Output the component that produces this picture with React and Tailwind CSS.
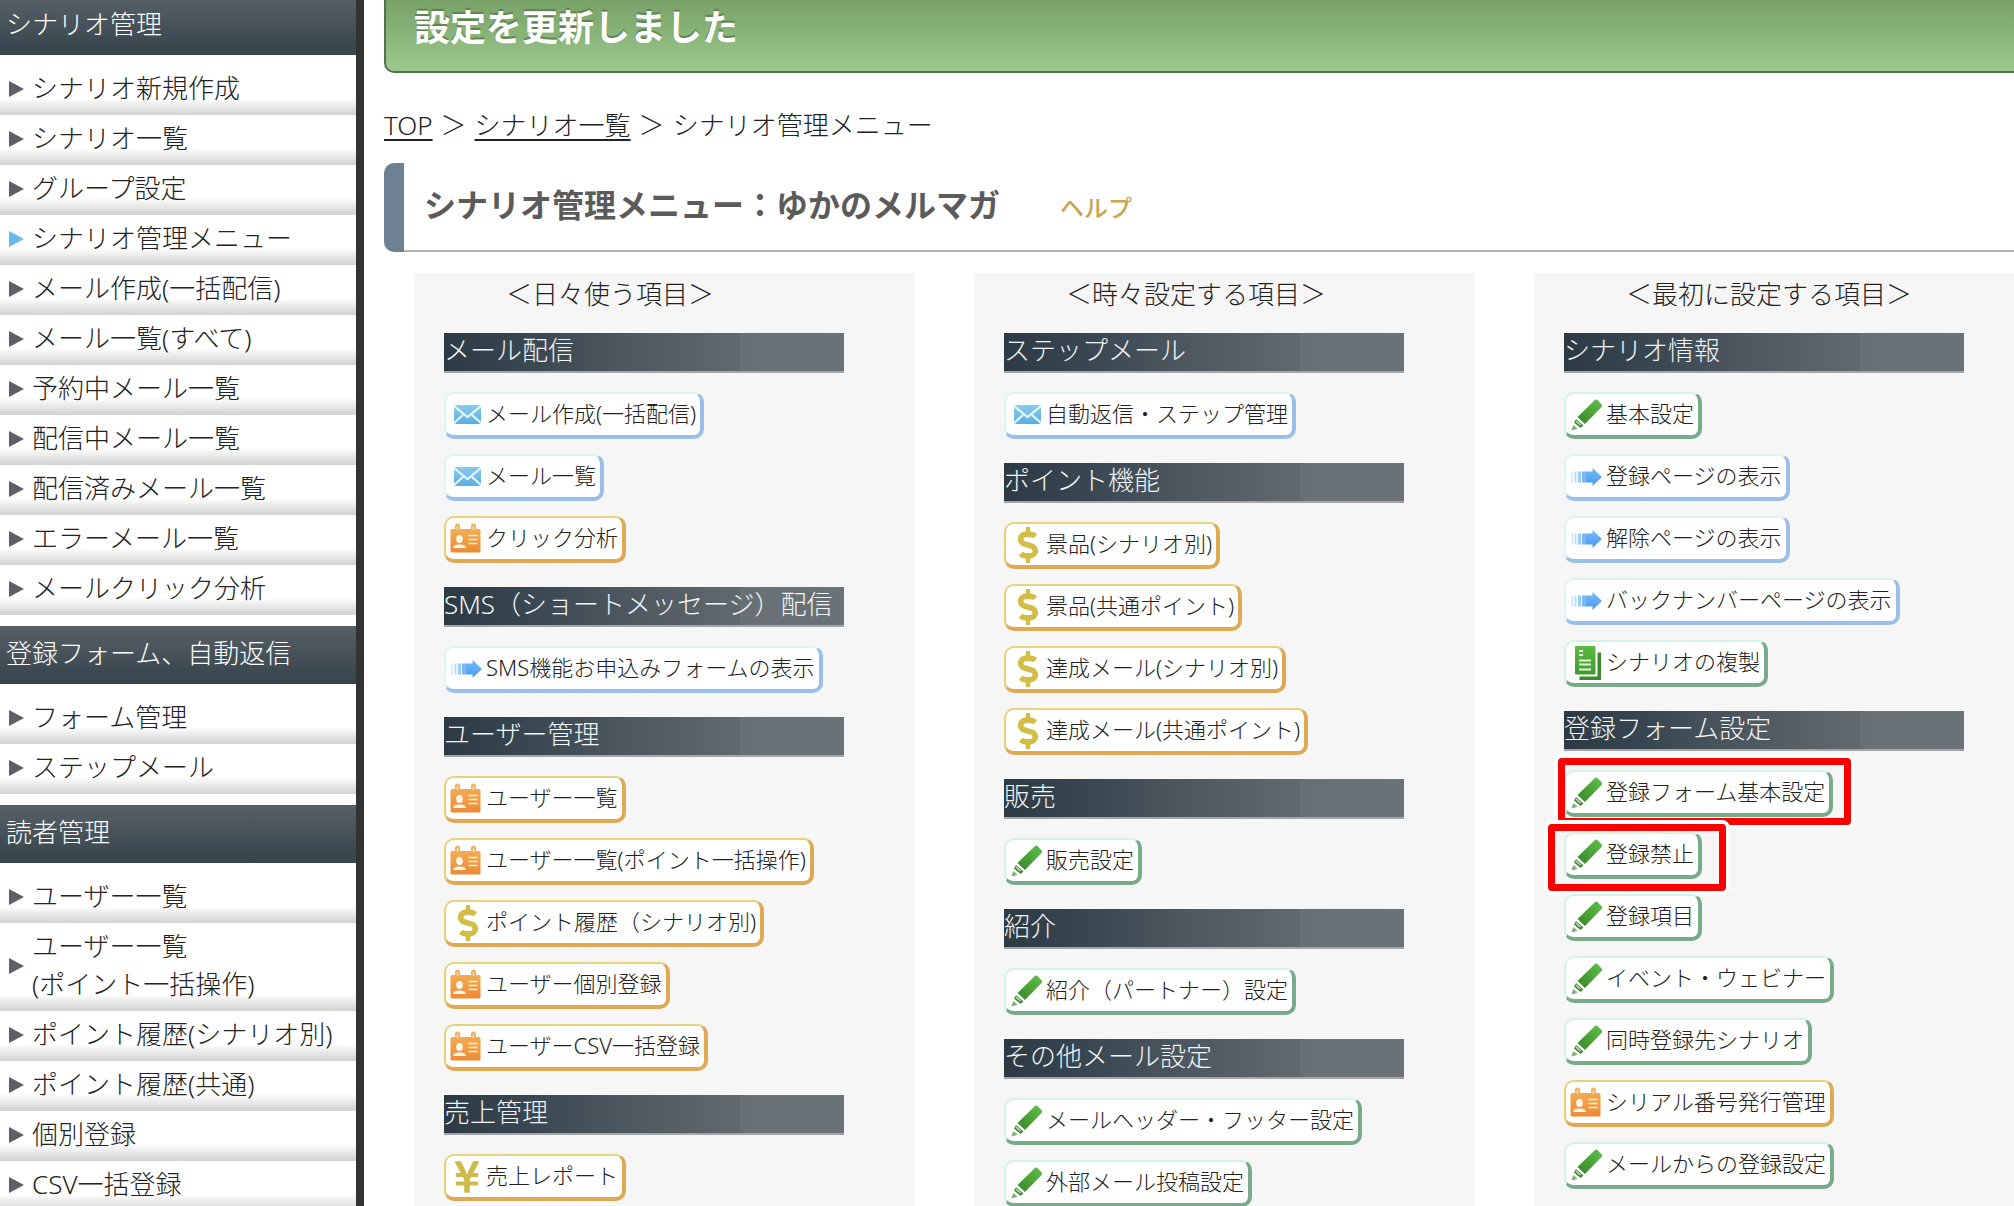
import { FaDollarSign, FaYenSign } from "react-icons/fa";

const sideMenu = [
  {
    title: "シナリオ管理",
    items: [
      { label: "シナリオ新規作成" },
      { label: "シナリオ一覧" },
      { label: "グループ設定" },
      { label: "シナリオ管理メニュー", current: true },
      { label: "メール作成(一括配信)" },
      { label: "メール一覧(すべて)" },
      { label: "予約中メール一覧" },
      { label: "配信中メール一覧" },
      { label: "配信済みメール一覧" },
      { label: "エラーメール一覧" },
      { label: "メールクリック分析" },
    ],
  },
  {
    title: "登録フォーム、自動返信",
    items: [{ label: "フォーム管理" }, { label: "ステップメール" }],
  },
  {
    title: "読者管理",
    items: [
      { label: "ユーザー一覧" },
      { label: "ユーザー一覧", sub: "(ポイント一括操作)" },
      { label: "ポイント履歴(シナリオ別)" },
      { label: "ポイント履歴(共通)" },
      { label: "個別登録" },
      { label: "CSV一括登録" },
    ],
  },
];

const columns = [
  {
    title: "＜日々使う項目＞",
    sections: [
      {
        title: "メール配信",
        items: [
          { icon: "mail", label: "メール作成(一括配信)" },
          { icon: "mail", label: "メール一覧" },
          { icon: "card", label: "クリック分析" },
        ],
      },
      {
        title: "SMS（ショートメッセージ）配信",
        items: [{ icon: "arrow", label: "SMS機能お申込みフォームの表示" }],
      },
      {
        title: "ユーザー管理",
        items: [
          { icon: "card", label: "ユーザー一覧" },
          { icon: "card", label: "ユーザー一覧(ポイント一括操作)" },
          { icon: "dollar", label: "ポイント履歴（シナリオ別)" },
          { icon: "card", label: "ユーザー個別登録" },
          { icon: "card", label: "ユーザーCSV一括登録" },
        ],
      },
      {
        title: "売上管理",
        items: [{ icon: "yen", label: "売上レポート" }],
      },
    ],
  },
  {
    title: "＜時々設定する項目＞",
    sections: [
      {
        title: "ステップメール",
        items: [{ icon: "mail", label: "自動返信・ステップ管理" }],
      },
      {
        title: "ポイント機能",
        items: [
          { icon: "dollar", label: "景品(シナリオ別)" },
          { icon: "dollar", label: "景品(共通ポイント)" },
          { icon: "dollar", label: "達成メール(シナリオ別)" },
          { icon: "dollar", label: "達成メール(共通ポイント)" },
        ],
      },
      { title: "販売", items: [{ icon: "pen", label: "販売設定" }] },
      {
        title: "紹介",
        items: [{ icon: "pen", label: "紹介（パートナー）設定" }],
      },
      {
        title: "その他メール設定",
        items: [
          { icon: "pen", label: "メールヘッダー・フッター設定" },
          { icon: "pen", label: "外部メール投稿設定" },
        ],
      },
    ],
  },
  {
    title: "＜最初に設定する項目＞",
    sections: [
      {
        title: "シナリオ情報",
        items: [
          { icon: "pen", label: "基本設定" },
          { icon: "arrow", label: "登録ページの表示" },
          { icon: "arrow", label: "解除ページの表示" },
          { icon: "arrow", label: "バックナンバーページの表示" },
          { icon: "copy", label: "シナリオの複製" },
        ],
      },
      {
        title: "登録フォーム設定",
        items: [
          {
            icon: "pen",
            label: "登録フォーム基本設定",
            frame: "-top-4 -bottom-3 -left-[10px] -right-[22px]",
          },
          {
            icon: "pen",
            label: "登録禁止",
            frame: "-top-3 -bottom-4 -left-5 -right-7",
          },
          { icon: "pen", label: "登録項目" },
          { icon: "pen", label: "イベント・ウェビナー" },
          { icon: "pen", label: "同時登録先シナリオ" },
          { icon: "card", label: "シリアル番号発行管理" },
          { icon: "pen", label: "メールからの登録設定" },
        ],
      },
    ],
  },
];

const borderColors = {
  mail: "border-t-[#dcf6ec] border-l-[#dcf6ec] border-r-[#9abfe8] border-b-[#9abfe8]",
  arrow: "border-t-[#dcf6ec] border-l-[#dcf6ec] border-r-[#9abfe8] border-b-[#9abfe8]",
  card: "border-t-[#e5d47c] border-l-[#e9cf72] border-r-[#e0aa55] border-b-[#e0aa55]",
  dollar: "border-t-[#e5d47c] border-l-[#e9cf72] border-r-[#e0aa55] border-b-[#e0aa55]",
  yen: "border-t-[#e5d47c] border-l-[#e9cf72] border-r-[#e0aa55] border-b-[#e0aa55]",
  pen: "border-t-[#d3f4e3] border-l-[#d3f4e3] border-r-[#78ab8a] border-b-[#78ab8a]",
  copy: "border-t-[#d3f4e3] border-l-[#d3f4e3] border-r-[#78ab8a] border-b-[#78ab8a]",
};

const MailIcon = () => (
  <svg viewBox="0 0 32 32" className="h-8 w-8" aria-hidden="true">
    <rect x="4" y="6" width="27" height="19" rx="2.500" fill="url(#mailFill)" />
    <path
      d="M4 7l13.500 11L31 7M4 24l9-8M31 24l-9-8"
      fill="none"
      stroke="#e4f5fc"
      strokeWidth="2.200"
    />
  </svg>
);

const CardIcon = () => (
  <svg viewBox="0 0 32 32" className="h-8 w-8" aria-hidden="true">
    <path
      d="M2 6h3V3a2 2 0 0 1 5 0v3h11V3a2 2 0 0 1 5 0v3h3a1.500 1.500 0 0 1 1.500 1.500V28a1.500 1.500 0 0 1-1.500 1.500H2A1.500 1.500 0 0 1 .5 28V7.500A1.500 1.500 0 0 1 2 6z"
      fill="url(#cardFill)"
    />
    <path d="M7.500 3v4M23.500 3v4" stroke="#fbe3bd" strokeWidth="1.500" />
    <ellipse cx="9.500" cy="16" rx="3.300" ry="4" fill="#fff7ea" />
    <path d="M3 25c.5-3 3.500-3.500 6.500-3.500s6 .5 6.500 3.500z" fill="#fff7ea" />
    <path
      d="M18.500 12.500h9M18.500 16.500h9M18.500 20.500h9"
      stroke="#fff0d8"
      strokeWidth="1.600"
    />
  </svg>
);

const ArrowIcon = () => (
  <svg viewBox="0 0 32 32" className="h-8 w-8" aria-hidden="true">
    <path
      d="M16 10.500h6.500V7L32 16l-9.500 9v-3.500H16z"
      fill="url(#arrowFill)"
    />
    <rect x="12" y="10.500" width="4" height="11" fill="#79b7f5" />
    <rect x="8" y="10.500" width="3" height="11" fill="#9ccaf7" />
    <rect x="4.500" y="10.500" width="2" height="11" fill="#badbfa" />
    <rect x="1.500" y="10.500" width="1.500" height="11" fill="#cfe5fb" />
  </svg>
);

const PenIcon = () => (
  <svg viewBox="0 0 32 32" className="h-8 w-8" aria-hidden="true">
    <path
      d="M25 1a2 2 0 0 1 2.500 0l4.300 4.500a1.500 1.500 0 0 1 0 2.200L15 25 7.500 18z"
      fill="url(#penFill)"
    />
    <path d="M6 20l7.500 6.500-3 2.500-6.500-5.500z" fill="#4a8a3b" />
    <path d="M6 22l4.500 4" stroke="#b8e0ac" strokeWidth="1.500" />
    <path d="M3.500 26l4 3.500-4.500 2-1.500-1.200z" fill="#86b07c" />
  </svg>
);

const CopyIcon = () => (
  <svg viewBox="0 0 32 36" className="h-9 w-8" aria-hidden="true">
    <path d="M27.500 7.500H31V35H9.500v-3.500h18z" fill="#3d8a2b" />
    <rect x="5" y="1" width="20.500" height="28.500" rx="1" fill="url(#copyFill)" />
    <path
      d="M9 6h4M9 10h4M9 15.500h12M9 19.500h12M9 24.500h12"
      stroke="#e3f6dc"
      strokeWidth="2"
    />
  </svg>
);

const DollarIcon = () => (
  <FaDollarSign className="h-9 w-8 pl-1 text-[#d2bd47]" aria-hidden="true" />
);

const YenIcon = () => (
  <FaYenSign className="h-9 w-8 pl-[2px] text-[#cdbb4a]" aria-hidden="true" />
);

const icons = {
  mail: MailIcon,
  card: CardIcon,
  arrow: ArrowIcon,
  pen: PenIcon,
  copy: CopyIcon,
  dollar: DollarIcon,
  yen: YenIcon,
};

// gradients shared by all the small icons
const IconDefs = () => (
  <svg className="absolute h-0 w-0" aria-hidden="true">
    <defs>
      <linearGradient id="mailFill" x1="0" y1="0" x2="0" y2="1">
        <stop offset="0" stopColor="#8ccbea" />
        <stop offset="1" stopColor="#5aaee0" />
      </linearGradient>
      <linearGradient id="cardFill" x1="0" y1="0" x2="0" y2="1">
        <stop offset="0" stopColor="#f2b45a" />
        <stop offset="1" stopColor="#ee8a35" />
      </linearGradient>
      <linearGradient id="arrowFill" x1="0" y1="0" x2="0" y2="1">
        <stop offset="0" stopColor="#74b8f8" />
        <stop offset="1" stopColor="#4d9cf0" />
      </linearGradient>
      <linearGradient id="penFill" x1="1" y1="0" x2="0" y2="1">
        <stop offset="0" stopColor="#5fc148" />
        <stop offset="1" stopColor="#378526" />
      </linearGradient>
      <linearGradient id="copyFill" x1="0" y1="0" x2="0" y2="1">
        <stop offset="0" stopColor="#5cbb45" />
        <stop offset="1" stopColor="#3f9a2c" />
      </linearGradient>
    </defs>
  </svg>
);

const SideItem = ({ item }) => {
  return (
    <li className="bg-linear-to-t from-[#d2d2d2] to-white to-[17px]">
      <a
        href="#"
        aria-current={item.current ? "page" : undefined}
        className="flex items-center gap-2 pt-1 pb-[6px] pl-2 leading-[38px]"
      >
        <svg
          viewBox="0 0 16 16"
          className={
            item.current
              ? "h-4 w-4 shrink-0 text-[#6cb8e8]"
              : "h-4 w-4 shrink-0 text-[#5d6066]"
          }
          aria-hidden="true"
        >
          <path d="M1 0v16L16 8z" fill="currentColor" />
        </svg>
        <span className="pb-[2px]">
          {item.label}
          {item.sub ? (
            <>
              <br />
              {item.sub}
            </>
          ) : null}
        </span>
      </a>
    </li>
  );
};

const Sidebar = () => {
  return (
    <nav className="-mt-[3px] w-[364px] shrink-0 border-r-8 border-[#333]">
      {sideMenu.map((group) => (
        <section key={group.title} className="pb-[11px]">
          <h2 className="h-[58px] bg-linear-to-b from-[#576067] to-[#36434b] pl-[6px] leading-[54px] text-white">
            {group.title}
          </h2>
          <ul className="pt-[10px]">
            {group.items.map((item, i) => (
              <SideItem key={i} item={item} />
            ))}
          </ul>
        </section>
      ))}
    </nav>
  );
};

const MenuButton = ({ item }) => {
  const Icon = icons[item.icon];
  return (
    <li className="relative">
      <a
        href="#"
        className={`flex h-[47px] items-center rounded-[10px] border-t-2 border-r-4 border-b-4 border-l-2 bg-white px-1 text-[22px] leading-8 ${borderColors[item.icon]}`}
      >
        <Icon />
        <span className="pb-1 pl-1">{item.label}</span>
      </a>
      {item.frame ? (
        <span
          className={`pointer-events-none absolute rounded-lg border-4 border-white ${item.frame}`}
        >
          <span className="block h-full rounded-sm border-[7px] border-[#fb0000]" />
        </span>
      ) : null}
    </li>
  );
};

const MenuSection = ({ section }) => {
  return (
    <section>
      <h3 className="mb-[19px] h-10 w-[400px] border-b-2 border-[#a3a6a8] bg-[linear-gradient(to_right,#2d3a44_0%,#364550_18%,#4b555d_42%,#5f676d_70%,#60686c_74%,#687075_74%,#697275_100%)] leading-[34px] whitespace-nowrap text-[#f2f5f7]">
        {section.title}
      </h3>
      <ul className="flex flex-col items-start gap-[15px] whitespace-nowrap">
        {section.items.map((item) => (
          <MenuButton key={item.label} item={item} />
        ))}
      </ul>
    </section>
  );
};

const App = () => {
  return (
    <div
      lang="ja"
      className="flex h-screen overflow-hidden bg-white font-['Noto_Sans','Noto_Sans_CJK_JP',sans-serif] text-[26px] font-light text-[#222]"
    >
      <IconDefs />
      <Sidebar />
      <main className="min-w-0 flex-1 pl-5">
        <p
          role="status"
          className="h-[73px] rounded-bl-[10px] border-b-2 border-l-2 border-[#55704a] bg-linear-to-b from-[#78a267] to-[#9dc98e] pl-7 text-[36px] leading-[56px] font-bold text-white [text-shadow:0_-2px_1px_#5f8250]"
        >
          設定を更新しました
        </p>
        <div className="flex gap-2 pt-8 leading-10">
          <a href="#" className="underline decoration-2 underline-offset-4">
            TOP
          </a>
          <span>＞</span>
          <a href="#" className="underline decoration-2 underline-offset-4">
            シナリオ一覧
          </a>
          <span>＞</span>
          <span>シナリオ管理メニュー</span>
        </div>
        <div className="mt-[18px] flex h-[89px] items-stretch">
          <div className="w-5 rounded-l-[10px] bg-[#6e8193]" />
          <div className="flex flex-1 items-baseline gap-[60px] border-b-2 border-[#b2b2b4] pt-[18px] pl-5 leading-[48px]">
            <h1 className="text-[32px] font-bold text-[#5b5b5b]">
              シナリオ管理メニュー：ゆかのメルマガ
            </h1>
            <a href="#" className="text-[24px] font-medium text-[#c9a552]">
              ヘルプ
            </a>
          </div>
        </div>
        <div className="flex gap-[59px] pt-[21px] pl-[30px]">
          {columns.map((column) => (
            <div
              key={column.title}
              className="min-h-screen w-[501px] shrink-0 bg-[#f6f6f6] pl-[30px]"
            >
              <h2 className="mb-5 pt-[2px] pl-[62px] leading-[38px]">
                {column.title}
              </h2>
              <div className="flex flex-col gap-6">
                {column.sections.map((section) => (
                  <MenuSection key={section.title} section={section} />
                ))}
              </div>
            </div>
          ))}
        </div>
      </main>
    </div>
  );
};

export default App;
